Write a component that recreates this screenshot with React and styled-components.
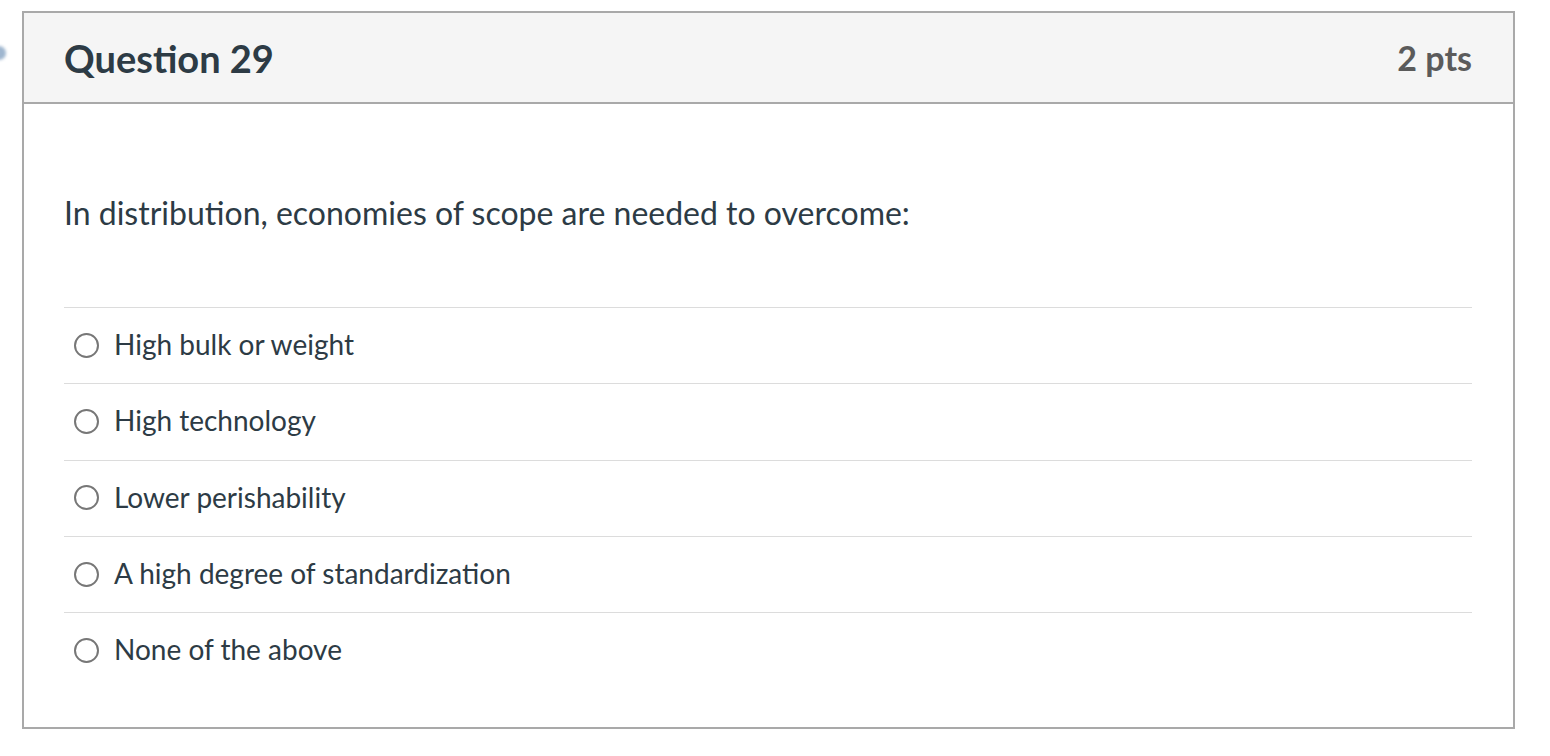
import React from "react";
import styled, { createGlobalStyle } from "styled-components";

const Global = createGlobalStyle`
  html, body { margin: 0; padding: 0; background: #fff; }
  body { font-family: Lato, "Open Sans", sans-serif; color: #2d3b45; }
`;

const Page = styled.div`
  position: relative;
  padding: 11px 35px 0 22px;
`;

const EdgeIcon = styled.div`
  position: absolute;
  left: -8px;
  top: 46px;
  width: 14px;
  height: 14px;
  border-radius: 50%;
  background: #9fb6cf;
  filter: blur(1.5px);
`;

const Card = styled.div`
  border: 2px solid #a9a9a9;
  width: 1489px;
  box-sizing: content-box;
`;

const Header = styled.div`
  display: flex;
  align-items: center;
  justify-content: space-between;
  height: 89px;
  padding: 0 41px 0 40px;
  background: #f5f5f5;
  border-bottom: 2px solid #a9a9a9;
`;

const Title = styled.h2`
  margin: 0;
  font-size: 38px;
  font-weight: 700;
  color: #2d3b45;
`;

const Points = styled.span`
  font-size: 34px;
  font-weight: 700;
  color: #5b5b5b;
`;

const Body = styled.div`
  padding: 87px 41px 39px 40px;
`;

const Prompt = styled.p`
  margin: 0 0 72px;
  font-size: 32px;
  line-height: 44px;
`;

const Answers = styled.div`
  display: flex;
  flex-direction: column;
`;

const Answer = styled.label`
  display: flex;
  align-items: center;
  gap: 15px;
  height: 76.3px;
  box-sizing: border-box;
  padding: 0 0 3px 10px;
  border-top: 1.5px solid #dcdcdc;
  font-size: 28px;
  cursor: pointer;
`;

const Radio = styled.span`
  width: 21px;
  height: 21px;
  border: 2px solid #777;
  border-radius: 50%;
  flex: none;
  margin-top: 2px;
`;

const options = [
  "High bulk or weight",
  "High technology",
  "Lower perishability",
  "A high degree of standardization",
  "None of the above",
];

export default function App() {
  return (
    <>
      <Global />
      <Page>
        <EdgeIcon />
        <Card>
          <Header>
            <Title>Question 29</Title>
            <Points>2 pts</Points>
          </Header>
          <Body>
            <Prompt>In distribution, economies of scope are needed to overcome:</Prompt>
            <Answers>
              {options.map((o) => (
                <Answer key={o}>
                  <Radio />
                  {o}
                </Answer>
              ))}
            </Answers>
          </Body>
        </Card>
      </Page>
    </>
  );
}
